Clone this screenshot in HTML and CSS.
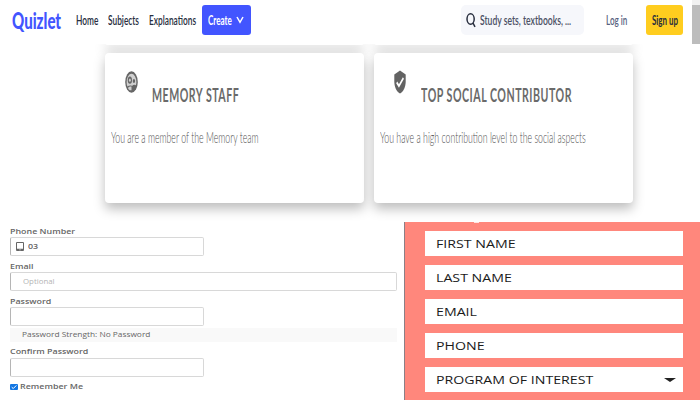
FILE: index.html
```
<!DOCTYPE html>
<html lang="en">
<head>
<meta charset="utf-8">
<title>Quizlet</title>
<link rel="stylesheet" href="styles.css">
</head>
<body>
<header class="topbar">
  <a class="logo"><span class="squeeze">Quizlet</span></a>
  <nav class="nav">
    <a class="nav-home"><span class="squeeze">Home</span></a>
    <a class="nav-subjects"><span class="squeeze">Subjects</span></a>
    <a class="nav-explanations"><span class="squeeze">Explanations</span></a>
  </nav>
  <button class="create"><span class="squeeze">Create</span>
    <svg class="chevron" viewBox="0 0 8 8"><path d="M1 1 4 6.300 7 1"/></svg>
  </button>
  <div class="search">
    <svg class="magnifier" viewBox="0 0 10 16"><ellipse cx="4.6" cy="7" rx="3.6" ry="5.2"/><path d="M7 11 9 14.800"/></svg>
    <span class="squeeze">Study sets, textbooks, ...</span>
  </div>
  <a class="login"><span class="squeeze">Log in</span></a>
  <button class="signup"><span class="squeeze">Sign up</span></button>
  <div class="scrollbar"><div class="thumb"></div></div>
</header>

<section class="cards">
  <div class="card previous"></div>
  <div class="card previous"></div>
  <article class="card">
    <div class="card-head">
      <svg class="badge-icon" viewBox="0 0 24 24" preserveAspectRatio="none"><circle cx="12" cy="12" r="11.600" fill="#666"/><path d="M3 12a9 9 0 0 1 18 0c0 1.500-.3 2.500-1 3.500-2-.8-5-.8-7 .8-3-.8-6-.5-8.500.7-1-1.500-1.500-3-1.500-5z" fill="#d0d0d0"/><path d="M5.500 18.500c2-1.500 4.500-1.700 6.500-1.500v4c-3 .3-5.500-.5-6.500-2.500z" fill="#d0d0d0"/><circle cx="9" cy="10" r="3.900" fill="#666"/><circle cx="9" cy="10" r="1.700" fill="#d0d0d0"/><circle cx="16.500" cy="11" r="2.200" fill="#666"/></svg>
      <h2><span class="squeeze">MEMORY STAFF</span></h2>
    </div>
    <p><span class="squeeze">You are a member of the Memory team</span></p>
  </article>
  <article class="card">
    <div class="card-head">
      <svg class="badge-icon shield" viewBox="2 0 20 24" preserveAspectRatio="none"><path fill="#636363" d="M12 .5 2.500 4.500v7c0 5.500 4 10.500 9.500 12 5.500-1.500 9.500-6.500 9.500-12v-7z"/><path d="M6.500 12.300l3.700 3.700 7.500-8" fill="none" stroke="#fff" stroke-width="2.500"/></svg>
      <h2><span class="squeeze">TOP SOCIAL CONTRIBUTOR</span></h2>
    </div>
    <p><span class="squeeze">You have a high contribution level to the social aspects</span></p>
  </article>
</section>

<main class="forms">
  <form class="account">
    <label><span class="stretch">Phone Number</span></label>
    <div class="input phone">
      <svg class="tablet" viewBox="0 0 8 10" preserveAspectRatio="none"><path fill="#666" fill-rule="evenodd" d="M1 0h6a1 1 0 0 1 1 1v8a1 1 0 0 1-1 1H1a1 1 0 0 1-1-1V1a1 1 0 0 1 1-1zM1 1.200v6.300h6V1.200zM3.400 8.200v.9h1.200v-.9z"/></svg>
      <span class="stretch">03</span>
    </div>
    <label><span class="stretch">Email</span></label>
    <div class="input wide"><span class="stretch placeholder">Optional</span></div>
    <label><span class="stretch">Password</span></label>
    <div class="input"></div>
    <div class="strength"><span class="stretch">Password Strength: No Password</span></div>
    <label class="confirm"><span class="stretch">Confirm Password</span></label>
    <div class="input"></div>
    <div class="remember">
      <svg class="check" viewBox="0 0 8 6"><rect width="8" height="6" rx="1" fill="#1276e3"/><path d="M1.700 3.200 3.300 4.500 6.400 1.400" fill="none" stroke="#fff"/></svg>
      <span class="stretch">Remember Me</span>
    </div>
  </form>
  <form class="program">
    <div class="field"><span class="stretch">FIRST NAME</span></div>
    <div class="field"><span class="stretch">LAST NAME</span></div>
    <div class="field"><span class="stretch">EMAIL</span></div>
    <div class="field"><span class="stretch">PHONE</span></div>
    <div class="field select"><span class="stretch">PROGRAM OF INTEREST</span>
      <svg class="caret" viewBox="0 0 12 4"><path d="M0 0h12L6 4z"/></svg>
    </div>
  </form>
</main>
</body>
</html>
```

FILE: styles.css
```
* { box-sizing: border-box; }
body {
  margin: 0;
  width: 700px;
  height: 400px;
  overflow: hidden;
  background: #fff;
  font-family: "Open Sans", sans-serif;
}
.squeeze, .stretch {
  display: inline-block;
  white-space: nowrap;
  transform-origin: 0 50%;
}

/* Top bar */
.topbar {
  display: flex;
  align-items: center;
  position: relative;
  z-index: 1;
  height: 44px;
  padding: 0 0 4px 12px;
  background: #fff;
  font: 600 13px/20px Lato, sans-serif;
  color: #282e3e;
}
.topbar .squeeze { transform: scaleX(.64); }
.logo { width: 64px; font: 900 23px/30px Lato, sans-serif; color: #4255ff; }
.topbar .logo .squeeze { transform: scaleX(.655); }
.nav { display: flex; width: 126px; }
.nav-home { width: 32px; }
.nav-subjects { width: 41px; }
.nav-explanations { width: 50px; }
.nav .squeeze { margin-left: -.5px; }
.create, .signup {
  display: flex;
  align-items: center;
  height: 30px;
  padding: 0 6px;
  border: 0;
  border-radius: 3px;
  font: 700 13px/20px Lato, sans-serif;
}
.create { width: 49px; color: #fff; background: #4255ff; }
.create .squeeze { width: 28px; transform: scaleX(.62); }
.chevron { width: 8px; height: 8px; flex: none; fill: none; stroke: #fff; stroke-width: 1.5; }
.search {
  display: flex;
  align-items: center;
  width: 123px;
  height: 30px;
  margin-left: 210px;
  padding-left: 5px;
  border-radius: 5px;
  background: #f6f7fb;
  color: #4b5064;
}
.topbar .search .squeeze { width: 90px; margin-left: 4px; transform: scaleX(.66); }
.magnifier { width: 10px; height: 16px; flex: none; fill: none; stroke: #282e3e; stroke-width: 1.5; }
.login { width: 40px; margin-left: 22px; color: #586380; }
.topbar .login .squeeze { transform: scaleX(.62); }
.signup { width: 37px; background: #ffcd1f; color: #282e3e; }
.topbar .signup .squeeze { transform: scaleX(.61); }
.scrollbar { width: 8px; height: 44px; margin: 4px 0 0 9px; padding-top: 5px; background: #f1f1f1; }
.thumb { height: 39px; background: #bdbdbd; }

/* Achievement cards */
.cards {
  display: grid;
  grid-template-columns: 259px 259px;
  grid-template-rows: 1px 150px;
  gap: 8px 10px;
  height: 178px;
  padding-left: 105px;
  overflow: hidden;
}
.card {
  padding: 18px 6px 0;
  border-radius: 4px;
  background: #fff;
  box-shadow: 0 6px 12px rgba(0, 0, 0, .26);
}
.card.previous { padding: 0; margin-top: -4px; }
.card-head { display: flex; height: 54px; }
.badge-icon { flex: none; width: 13px; height: 22px; margin-left: 14px; }
.shield { width: 12px; height: 24px; margin-top: -1px; }
h2 {
  margin: 11px 0 0 14px;
  font: 700 19px/26px Lato, sans-serif;
  letter-spacing: .9px;
  color: #6a6a6a;
}
.shield + h2 { margin-left: 15px; }
h2 .squeeze { transform: scaleX(.56); }
p { margin: 2px 0 0; font: 300 16px/20px Lato, sans-serif; color: #505050; }
p .squeeze { transform: scaleX(.546); }

/* Lower forms */
.forms { display: flex; height: 178px; }
.account {
  width: 404px;
  padding: 4px 7px 0 10px;
  font: 600 7px/10px "Open Sans", sans-serif;
  color: #666;
}
.account .stretch { transform: scaleX(1.27); }
.account label { display: block; height: 11px; padding-top: 1px; }
.account .confirm { padding-top: 0; }
.input {
  display: flex;
  align-items: center;
  width: 194px;
  height: 19px;
  margin-bottom: 5px;
  border: 1px solid #d8d8d8;
  border-left-color: #b5b5b5;
  border-radius: 2px;
}
.input.wide { width: 387px; padding-left: 12px; }
.account .placeholder { font-weight: 400; color: #b4b4b4; transform: scaleX(1.12); }
.phone { padding-left: 5px; }
.tablet { width: 8px; height: 9px; margin-right: 4px; }
.strength {
  width: 387px;
  height: 14px;
  margin: -3px 0 5px;
  padding: 2px 12px;
  background: #f9f9f9;
  font-weight: 400;
}
.account .strength .stretch { transform: scaleX(1.19); }
.remember { display: flex; align-items: center; height: 10px; }
.check { width: 8px; height: 6px; margin-right: 2px; }
.program {
  display: flex;
  flex-direction: column;
  gap: 8.9px;
  width: 296px;
  padding: 9px 0 0 20px;
  border-left: 1px solid #8b7f86;
  background: #ff877c;
  position: relative;
}
/* Lower edge of the clipped heading */
.program::before {
  content: "";
  position: absolute;
  top: 0;
  left: 69px;
  width: 5px;
  height: 1px;
  background: #ffe4e1;
}
.field {
  display: flex;
  align-items: center;
  flex: none;
  width: 258px;
  height: 25px;
  padding: 1px 7px 0 10.5px;
  background: #fff;
  font: 400 10.5px/16px "Open Sans", sans-serif;
  color: #1a1a1a;
}
.field .stretch { transform: scaleX(1.35); }
.caret { width: 12px; height: 4px; margin-left: auto; fill: #222; }
```
